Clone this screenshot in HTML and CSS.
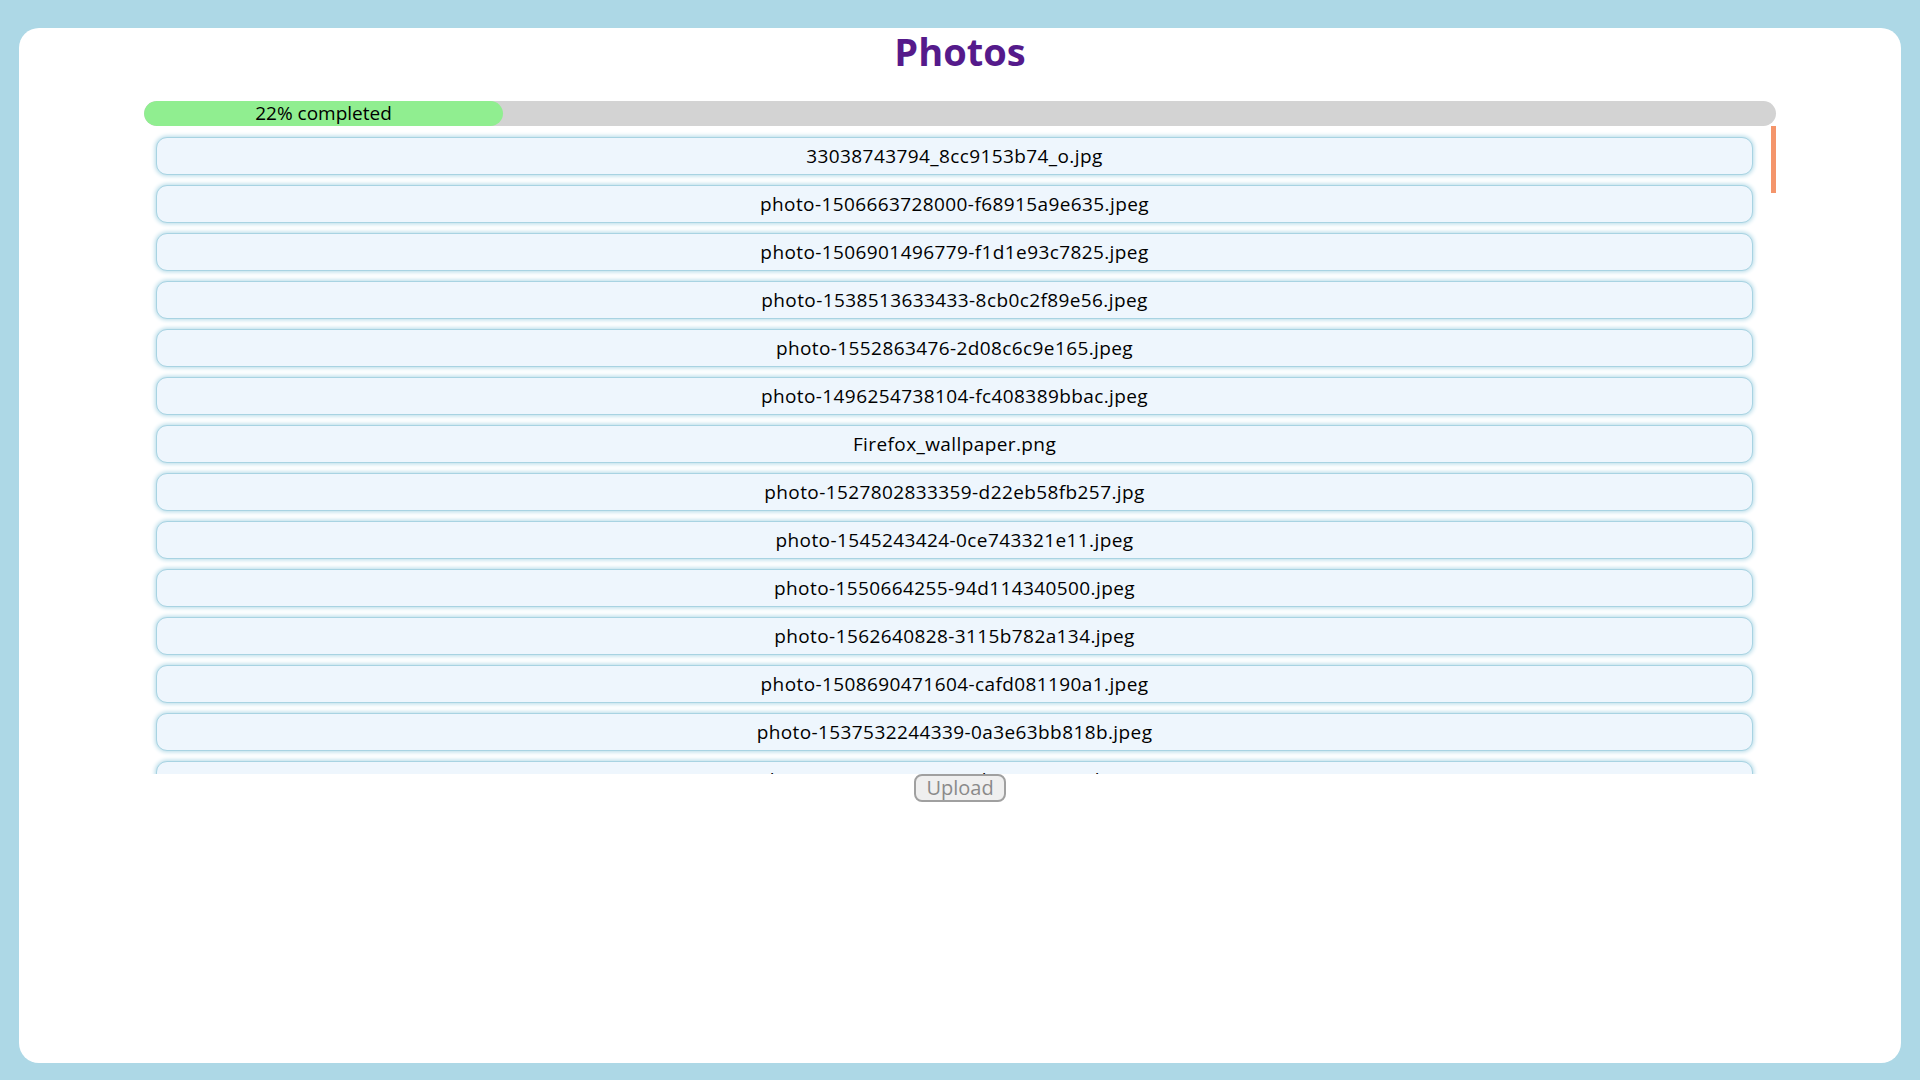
FILE: index.html
```html
<!DOCTYPE html>
<html lang="en">
<head>
<meta charset="utf-8">
<title>Photos</title>
<link rel="stylesheet" href="styles.css">
</head>
<body>
<main class="card">
  <h1 class="title">Photos</h1>
  <div class="progress">
    <div class="progress-fill" style="width: 22%">22% completed</div>
  </div>
  <div class="list-wrap">
    <ul class="file-list">
      <li class="file">33038743794_8cc9153b74_o.jpg</li>
      <li class="file">photo-1506663728000-f68915a9e635.jpeg</li>
      <li class="file">photo-1506901496779-f1d1e93c7825.jpeg</li>
      <li class="file">photo-1538513633433-8cb0c2f89e56.jpeg</li>
      <li class="file">photo-1552863476-2d08c6c9e165.jpeg</li>
      <li class="file">photo-1496254738104-fc408389bbac.jpeg</li>
      <li class="file">Firefox_wallpaper.png</li>
      <li class="file">photo-1527802833359-d22eb58fb257.jpg</li>
      <li class="file">photo-1545243424-0ce743321e11.jpeg</li>
      <li class="file">photo-1550664255-94d114340500.jpeg</li>
      <li class="file">photo-1562640828-3115b782a134.jpeg</li>
      <li class="file">photo-1508690471604-cafd081190a1.jpeg</li>
      <li class="file">photo-1537532244339-0a3e63bb818b.jpeg</li>
      <li class="file">photo-1541701494587-cb58502866ab.jpeg</li>
      <li class="file">photo-1500530855697-b586d89ba3ee.jpeg</li>
      <li class="file">photo-1469474968028-56623f02e42e.jpeg</li>
    </ul>
    <div class="scroll-thumb"></div>
  </div>
  <div class="actions">
    <button class="upload" type="button" disabled>Upload</button>
  </div>
</main>
</body>
</html>
```

FILE: styles.css
```css
html, body {
  margin: 0;
  height: 100%;
}

body {
  box-sizing: border-box;
  padding: 28px 19px 17px;
  background: #add8e6;
  font-family: "Open Sans", "Noto Sans", sans-serif;
  font-size: 18px;
  color: #000;
}

.card {
  box-sizing: border-box;
  height: 100%;
  background: #fff;
  border-radius: 20px;
  padding: 0 125px;
}

.title {
  margin: 0;
  padding-top: 3px;
  font-size: 38px;
  line-height: 40px;
  font-weight: 700;
  color: #551a8b;
  text-align: center;
}

.progress {
  margin-top: 30px;
  height: 25px;
  background: #d3d3d3;
  border-radius: 13px;
  overflow: hidden;
}

.progress-fill {
  height: 100%;
  background: #90ee90;
  border-radius: 13px;
  text-align: center;
  line-height: 25px;
  font-size: 19px;
  white-space: nowrap;
}

.list-wrap {
  position: relative;
}

.file-list {
  list-style: none;
  margin: 0;
  padding: 11px 0 0;
  height: 60vh;
  overflow-y: auto;
  box-sizing: border-box;
  scrollbar-width: none;
}

.file-list::-webkit-scrollbar {
  display: none;
}

.scroll-thumb {
  position: absolute;
  top: 0;
  right: 0;
  width: 5px;
  height: 67px;
  background: #f4956b;
}

.file {
  box-sizing: border-box;
  height: 38px;
  margin: 0 23px 10px 12px;
  background: #eef6fd;
  border: 1px solid #a8d3e2;
  border-radius: 11px;
  box-shadow: 0 0 4px 1px #b5dbe8;
  display: flex;
  align-items: center;
  justify-content: center;
  font-size: 19px;
  letter-spacing: 0.4px;
}

.actions {
  display: flex;
  justify-content: center;
}

.upload {
  box-sizing: border-box;
  height: 28px;
  padding: 0 10px;
  font-family: inherit;
  font-size: 20px;
  line-height: 24px;
  color: #8a8a8a;
  background: #efefef;
  border: 2px solid #a0a0a0;
  border-radius: 8px;
}
```
